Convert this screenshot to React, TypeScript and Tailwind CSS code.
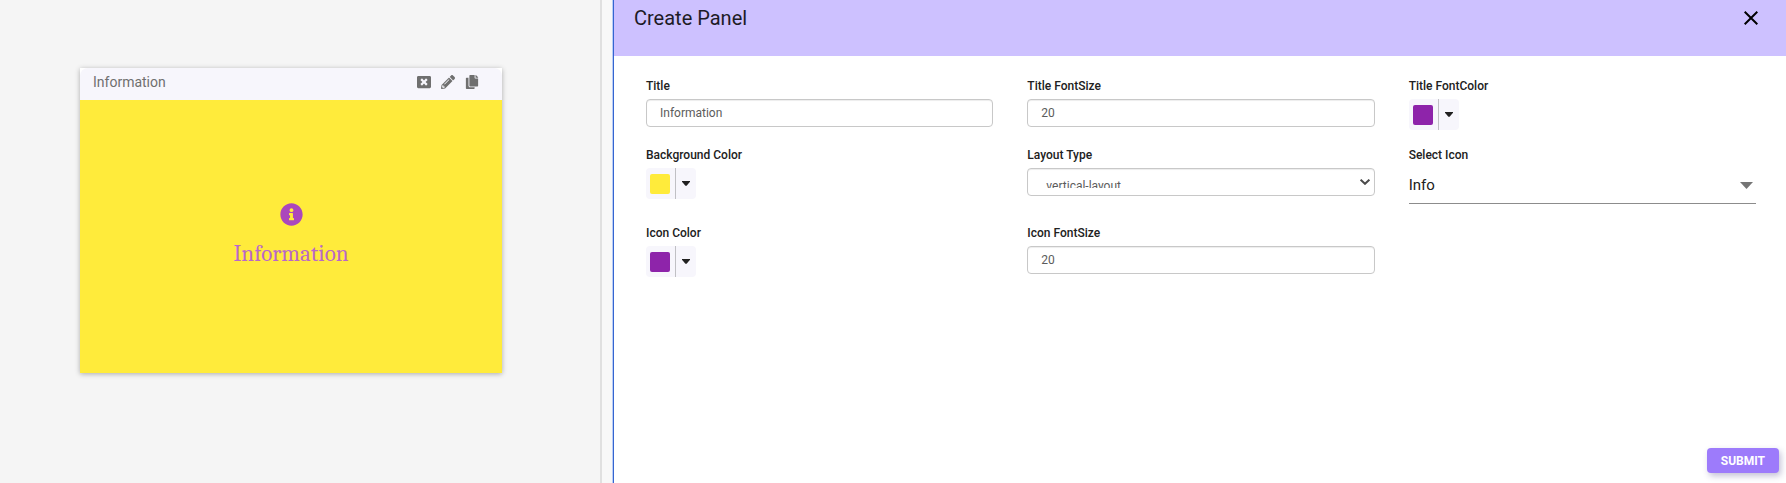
import { useState } from 'react';
import type { ReactNode } from 'react';
import { FaCopy, FaInfoCircle, FaPencilAlt, FaWindowClose } from 'react-icons/fa';

const inputClass =
  'block h-7 w-full rounded border border-[#c8c8c8] bg-white px-[13px] text-xs text-[#5c5c5c] shadow-[inset_0_1px_1px_rgba(0,0,0,0.075)] outline-none';

function Field({ id, label, children }: { id: string; label: string; children: ReactNode }) {
  return (
    <div>
      <label htmlFor={id} className="mb-[5px] block text-xs leading-4 font-medium text-[#212121]">
        {label}
      </label>
      {children}
    </div>
  );
}

function TextField({ id, label, initial }: { id: string; label: string; initial: string }) {
  const [value, setValue] = useState(initial);
  return (
    <Field id={id} label={label}>
      <input id={id} type="text" value={value} onChange={(e) => setValue(e.target.value)} className={inputClass} />
    </Field>
  );
}

function ColorField({ id, label, swatch }: { id: string; label: string; swatch: string }) {
  return (
    <Field id={id} label={label}>
      <div className="flex h-[31px] w-[50px] overflow-hidden rounded bg-[#f7f6fc]">
        <button id={id} type="button" className="flex w-[29px] items-center pl-1">
          <span className={`size-5 rounded-xs ${swatch}`} />
        </button>
        <button
          type="button"
          aria-label={`${label} options`}
          className="flex flex-1 items-center justify-center border-l border-[#c0c0c4]"
        >
          <svg viewBox="0 0 8 5" className="h-[5px] w-2" fill="#212121">
            <path d="M0 0h8v0.8L4.6 4.8h-1.2L0 0.8z" />
          </svg>
        </button>
      </div>
    </Field>
  );
}

function PreviewCard() {
  return (
    <section className="mr-[98px] ml-20 flex h-[305px] flex-col bg-white shadow-[0_1px_5px_rgba(0,0,0,0.3)]">
      <header className="flex h-8 items-center justify-between rounded-t-lg bg-[#f7f6fc] pr-[23px] pb-1 pl-[13px] text-[#6f6f6f]">
        <h2 className="text-sm">Information</h2>
        <div className="flex items-center gap-[10px] text-[14px]">
          <button type="button" aria-label="Close">
            <FaWindowClose />
          </button>
          <button type="button" aria-label="Edit">
            <FaPencilAlt />
          </button>
          <button type="button" aria-label="Copy">
            <FaCopy />
          </button>
        </div>
      </header>
      <div className="flex flex-1 flex-col items-center justify-center gap-3 bg-[#ffeb3b]">
        <FaInfoCircle className="size-[23px] text-[#ab47bc]" />
        <p className="font-[Cambria,Caladea,'Liberation_Serif',serif] text-[23px] leading-8 text-[#ba68c8]">
          Information
        </p>
      </div>
    </section>
  );
}

export default function App() {
  return (
    <div className="flex min-h-screen bg-[#f8f8f8] font-[Roboto,'Liberation_Sans',sans-serif]">
      <main className="w-[602px] shrink-0 border-r-2 border-[#e0e0e0] bg-[#f5f5f5] pt-[68px]">
        <PreviewCard />
      </main>
      <aside className="ml-[11px] flex flex-1 flex-col border-l border-[#3565d0] bg-white shadow-[-1px_0_0_#b9cdf5]">
        <header className="flex h-14 items-start justify-between bg-[#cdc1ff] pt-[6px] pr-7 pl-5">
          <h1 className="text-xl leading-6 text-[#1d1b26]">Create Panel</h1>
          <button type="button" aria-label="Close panel" className="pt-[5px]">
            <svg viewBox="0 0 14 14" className="size-[14px]" fill="none" stroke="#000" strokeWidth="2">
              <path d="M0.7 0.7l12.6 12.6M13.3 0.7L0.7 13.3" />
            </svg>
          </button>
        </header>
        <form className="flex flex-1 flex-col" onSubmit={(e) => e.preventDefault()}>
          <div className="grid grid-cols-3 gap-x-[34px] gap-y-[17px] pt-[22px] pr-[30px] pl-8">
            <TextField id="title" label="Title" initial="Information" />
            <TextField id="title-size" label="Title FontSize" initial="20" />
            <ColorField id="title-color" label="Title FontColor" swatch="bg-[#8e24aa]" />
            <ColorField id="background" label="Background Color" swatch="bg-[#ffeb3b]" />
            <Field id="layout" label="Layout Type">
              <div className="flex items-center">
                <select
                  id="layout"
                  defaultValue="vertical-layout"
                  className="block h-7 w-full appearance-none rounded border border-[#c8c8c8] bg-white pt-[9px] pb-[7px] pl-[18px] text-xs text-[#5c5c5c] shadow-[inset_0_1px_1px_rgba(0,0,0,0.075)] outline-none"
                >
                  <option>vertical-layout</option>
                  <option>horizontal-layout</option>
                </select>
                <svg
                  viewBox="0 0 10 6"
                  className="pointer-events-none mr-[5px] -ml-[15px] h-[6px] w-[10px] shrink-0"
                  fill="none"
                  stroke="#4a4a4a"
                  strokeWidth="2"
                >
                  <path d="M0.6 0.7L5 4.8L9.4 0.7" />
                </svg>
              </div>
            </Field>
            <Field id="icon" label="Select Icon">
              <div className="mb-1 flex h-9 items-center border-b border-[#8c8c8c]">
                <select id="icon" className="h-full w-full appearance-none text-[15px] text-[#212121] outline-none">
                  <option>Info</option>
                </select>
                <svg
                  viewBox="0 0 13 7"
                  className="pointer-events-none mr-[3px] -ml-4 h-[7px] w-[13px] shrink-0"
                  fill="#757575"
                >
                  <path d="M0 0h13L6.5 7z" />
                </svg>
              </div>
            </Field>
            <ColorField id="icon-color" label="Icon Color" swatch="bg-[#8e24aa]" />
            <TextField id="icon-size" label="Icon FontSize" initial="20" />
          </div>
          <footer className="mt-auto flex justify-end pr-[7px] pb-[10px]">
            <button
              type="submit"
              className="h-[25px] rounded bg-[#9d7bfb] px-[14px] text-xs font-bold text-white shadow-[2px_3px_6px_rgba(60,50,120,0.3)]"
            >
              SUBMIT
            </button>
          </footer>
        </form>
      </aside>
    </div>
  );
}
